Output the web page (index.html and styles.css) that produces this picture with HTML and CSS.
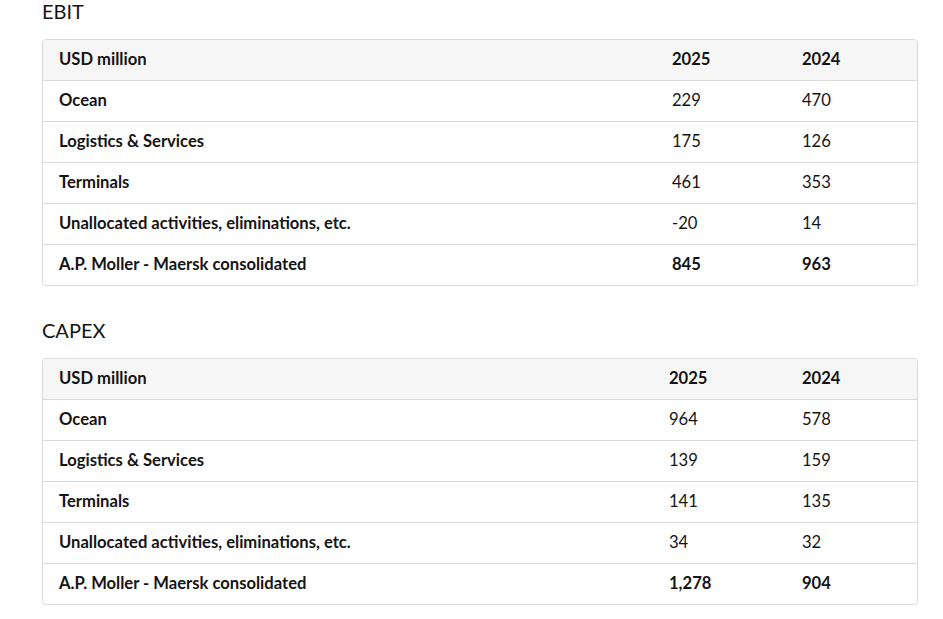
FILE: index.html
```html
<!DOCTYPE html>
<html>
<head>
<meta charset="utf-8">
<link rel="stylesheet" href="styles.css">
</head>
<body>
<section class="block">
  <h2 class="title">EBIT</h2>
  <div class="card">
    <table class="data t1">
      <colgroup><col class="c-label"><col class="c-a"><col class="c-b"></colgroup>
      <thead><tr><th>USD million</th><th>2025</th><th>2024</th></tr></thead>
      <tbody>
        <tr><th>Ocean</th><td>229</td><td>470</td></tr>
        <tr><th>Logistics &amp; Services</th><td>175</td><td>126</td></tr>
        <tr><th>Terminals</th><td>461</td><td>353</td></tr>
        <tr><th>Unallocated activities, eliminations, etc.</th><td>-20</td><td>14</td></tr>
        <tr class="total"><th>A.P. Moller - Maersk consolidated</th><td>845</td><td>963</td></tr>
      </tbody>
    </table>
  </div>
</section>
<section class="block">
  <h2 class="title">CAPEX</h2>
  <div class="card">
    <table class="data t2">
      <colgroup><col class="c-label"><col class="c-a"><col class="c-b"></colgroup>
      <thead><tr><th>USD million</th><th>2025</th><th>2024</th></tr></thead>
      <tbody>
        <tr><th>Ocean</th><td>964</td><td>578</td></tr>
        <tr><th>Logistics &amp; Services</th><td>139</td><td>159</td></tr>
        <tr><th>Terminals</th><td>141</td><td>135</td></tr>
        <tr><th>Unallocated activities, eliminations, etc.</th><td>34</td><td>32</td></tr>
        <tr class="total"><th>A.P. Moller - Maersk consolidated</th><td>1,278</td><td>904</td></tr>
      </tbody>
    </table>
  </div>
</section>
</body>
</html>
```
FILE: styles.css
```css
* { box-sizing: border-box; }
body {
  margin: 0;
  padding: 0 25px 0 42px;
  background: #fff;
  font-family: Lato, "Open Sans", sans-serif;
  color: #141414;
}
.block { margin: 0; }
.title {
  margin: 0;
  height: 39px;
  font-size: 20px;
  font-weight: 400;
  line-height: 23px;
  color: #141414;
}
.block + .block { margin-top: 33px; }
.card {
  border: 1px solid #dbdbdb;
  border-radius: 4px;
  overflow: hidden;
}
.data {
  width: 100%;
  border-collapse: collapse;
  table-layout: fixed;
  font-size: 16.6px;
}
.data .c-b { width: 131px; }
.t1 .c-a { width: 130px; }
.t2 .c-a { width: 133px; }
.data th, .data td {
  height: 41px;
  padding: 0 16px 1px;
  text-align: left;
  vertical-align: middle;
  border-top: 1px solid #dbdbdb;
  line-height: 20px;
}
.data thead th {
  height: 40px;
  border-top: none;
  background: #f6f6f6;
  font-weight: 700;
}
.data tbody th { font-weight: 700; }
.data td { font-weight: 400; }
.data .total td { font-weight: 700; }
```
